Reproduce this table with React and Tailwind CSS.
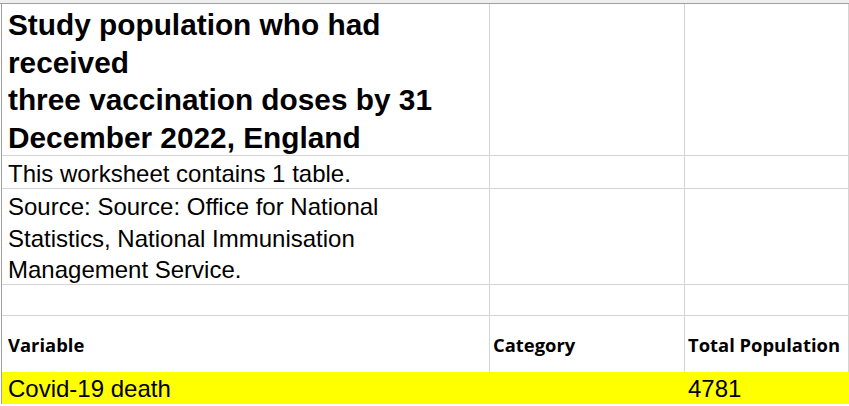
import React from 'react';

const arial = { fontFamily: '"Liberation Sans", Arial, sans-serif' };

const Cell = ({ className = '', children }) => (
  <div className={`border-r border-b border-[#d4d4d4] ${className}`}>{children}</div>
);

const App = () => {
  return (
    <div className="w-[849px] h-[406px] overflow-hidden bg-white text-black" style={arial}>
      <div className="h-[3px] bg-[#efefef]" />
      <div className="border-t border-[#9f9f9f] pl-px">
        <div className="border-l border-[#9f9f9f] grid grid-cols-[488px_195px_1fr]">
          {/* title row */}
          <Cell className="h-[152px] px-[6px] pt-[2px] font-bold text-[29.8px] leading-[37.5px] whitespace-nowrap">
            Study population who had<br />
            received<br />
            three vaccination doses by 31<br />
            December 2022, England
          </Cell>
          <Cell className="h-[152px]" />
          <Cell className="h-[152px]" />

          <Cell className="h-[33px] px-[6px] pt-[2px] text-[24px] leading-[32px] whitespace-nowrap">This worksheet contains 1 table.</Cell>
          <Cell className="h-[33px]" />
          <Cell className="h-[33px]" />

          <Cell className="h-[96px] px-[6px] text-[24px] leading-[31.5px] pt-[2px] whitespace-nowrap">
            Source: Source: Office for National<br />
            Statistics, National Immunisation<br />
            Management Service.
          </Cell>
          <Cell className="h-[96px]" />
          <Cell className="h-[96px]" />

          <Cell className="h-[31px]" />
          <Cell className="h-[31px]" />
          <Cell className="h-[31px]" />

          {/* header row */}
          {[
            ['Variable', 'px-[6px]'],
            ['Category', 'px-[3px]'],
            ['Total Population', 'px-[3px]'],
          ].map(([h, pad]) => (
            <div
              key={h}
              className={`h-[56px] border-r border-[#d4d4d4] ${pad} flex items-center pt-px font-bold text-[18.4px] whitespace-nowrap`}
              style={{ fontFamily: '"Open Sans", Calibri, sans-serif' }}
            >
              {h}
            </div>
          ))}

          {/* data row */}
          <div className="col-span-3 h-[32px] bg-[#ffff00] grid grid-cols-[488px_195px_1fr] text-[24px] leading-[32px] pt-px">
            <div className="px-[6px]">Covid-19 death</div>
            <div />
            <div className="px-[3px]">4781</div>
          </div>
        </div>
      </div>
    </div>
  );
};

export default App;
